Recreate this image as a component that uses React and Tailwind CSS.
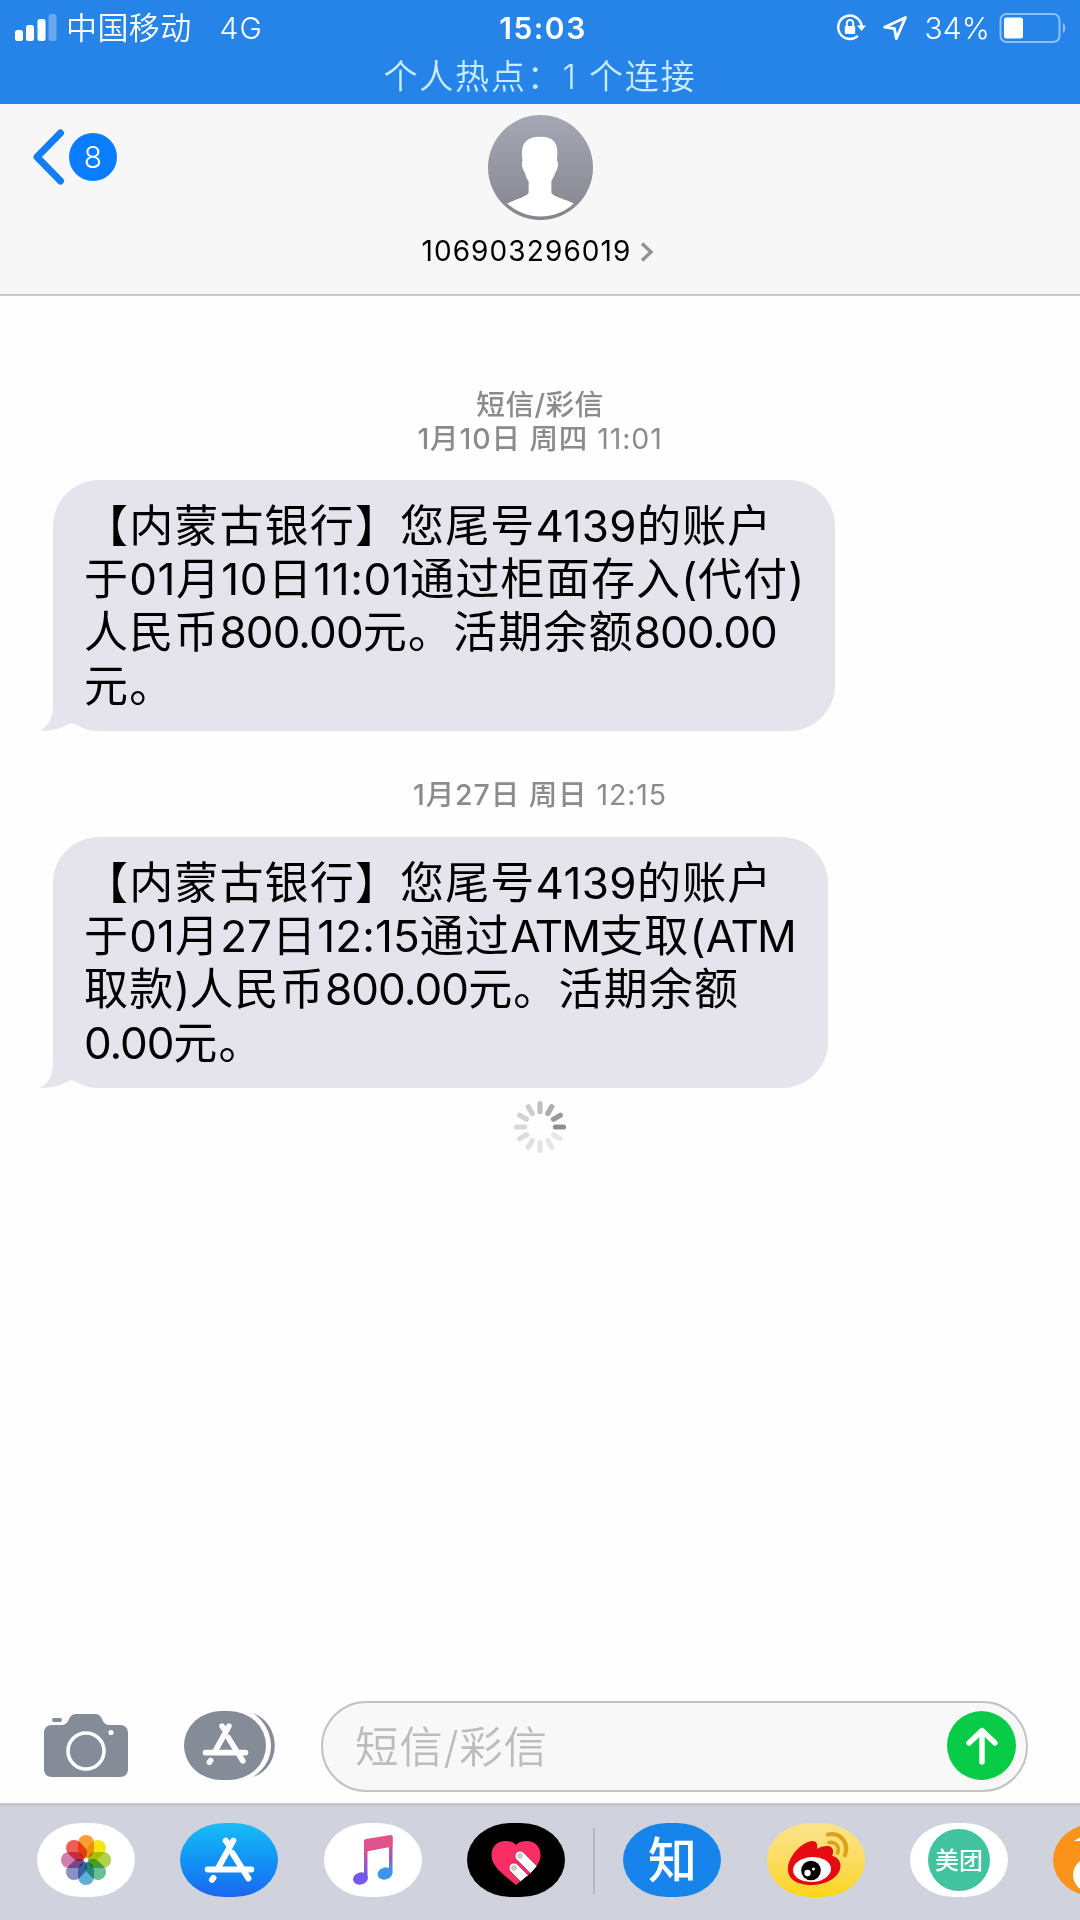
import React from "react";

// Splits a string into Latin and CJK runs so each script keeps its own tracking.
function Mixed({ text, digits }) {
  const runs = text.match(/[A-Z]+|[\x21-\x40]+|[^\x21-\x7e]+/g) || [];
  return runs.map((run, i) => (
    <span key={i} className={/[A-Z]/.test(run) ? "tracking-[-1.9px]" : /[\x21-\x40]/.test(run) ? digits : "tracking-[1.150px]"}>
      {run}
    </span>
  ));
}

function StatusBar() {
  return (
    <div className="h-[104px] bg-[#2684e8] text-white">
      <div className="grid h-[55px] grid-cols-3 items-center pr-[13px] pl-[15px] text-[30px]">
        <div className="flex items-center">
          <svg width="42" height="27" viewBox="0 0 42 27" fill="#fff">
            <rect x="0" y="16" width="8" height="11" rx="2.5" />
            <rect x="11" y="11" width="8" height="16" rx="2.5" />
            <rect x="22.500" y="5" width="8" height="22" rx="2.5" />
            <rect x="33.500" y="0" width="8" height="27" rx="2.5" opacity="0.3" />
          </svg>
          <span className="mt-px ml-[9px] text-[31px] font-[350] tracking-[0.4px]">中国移动</span>
          <span className="mt-px ml-[28px] font-[350] tracking-[0.9px]">4G</span>
        </div>
        <div className="mt-px pl-1 text-center font-semibold tracking-[1.500px]">15:03</div>
        <div className="flex items-center justify-end">
          <svg width="30" height="30" viewBox="0 0 30 30" fill="none" stroke="#fff" strokeWidth="2.500">
            <path d="M25.600 13.500A11.700 11.700 0 1 0 21.800 22.900" />
            <path d="M21 12.500h9l-4.500 5.500z" fill="#fff" stroke="none" />
            <rect x="8.800" y="13" width="10.400" height="8" rx="1" fill="#fff" stroke="none" />
            <path d="M10.800 13v-2.800a3.200 3.200 0 0 1 6.400 0V13" strokeWidth="2" />
          </svg>
          <svg className="ml-[16px]" width="26" height="26" viewBox="0 0 26 26" fill="none" stroke="#fff" strokeWidth="2.800" strokeLinejoin="round">
            <path d="M23.500 2.500L2.500 12.200l10 1.400 1.800 10z" />
          </svg>
          <span className="mt-px ml-[17px] text-[30px] font-[350] tracking-[0.1px]">34%</span>
          <svg className="ml-[9px]" width="68" height="32" viewBox="0 0 68 32" fill="none">
            <rect x="1.500" y="2" width="59" height="28" rx="6" stroke="#8cc0f7" strokeWidth="2" />
            <rect x="5" y="5.500" width="19" height="21" rx="2.500" fill="#fff" />
            <path d="M64 11c3 1 3 9 0 10z" fill="#8cc0f7" />
          </svg>
        </div>
      </div>
      <div className="pt-px text-center text-[34px] leading-[42px] font-[350] tracking-[1.800px] text-[#c9ebff]">
        个人热点：1 个连接
      </div>
    </div>
  );
}

function Header() {
  return (
    <div className="grid h-[192px] grid-cols-3 border-b-2 border-[#c9c9cb] bg-[#f7f7f8]">
      <div className="flex items-start pt-[25px] pl-[32px]">
        <svg width="34" height="56" viewBox="0 0 34 56" fill="none" stroke="#137ef3" strokeWidth="7" strokeLinecap="round" strokeLinejoin="round">
          <path d="M28.500 4L5 28l23.500 24" />
        </svg>
        <span className="mt-1 ml-[3px] flex size-12 items-center justify-center rounded-full bg-[#0a7cff] text-[30px] font-[350] text-white">
          8
        </span>
      </div>
      <div className="flex flex-col items-center pt-[11px]">
        <svg width="105" height="105" viewBox="0 0 106 106">
          <defs>
            <linearGradient id="avatar" x1="0" y1="0" x2="0" y2="1">
              <stop offset="0" stopColor="#a5a8b5" />
              <stop offset="1" stopColor="#85858d" />
            </linearGradient>
            <clipPath id="bust">
              <circle cx="53" cy="53" r="49.500" />
            </clipPath>
          </defs>
          <circle cx="53" cy="53" r="53" fill="url(#avatar)" />
          <path
            clipPath="url(#bust)"
            fill="#fff"
            d="M52 22c10-1 18 4 18 14 0 3 0 7-.5 10 2 1 1.500 8-1.500 12-1 4-3 6-4 9v11c0 4 14 7 22 11 10 5 10 20 10 20H10s0-15 10-20c8-4 21-7 21-11V67c-2-3-3-6-4-9-3-4-3.500-11-2-12-.5-3-1-7-.5-11 1-9 8-13 17.500-13z"
          />
        </svg>
        <div className="mt-[13px] flex items-center pr-[5px] text-[28px] leading-[36px] text-black">
          <span className="tracking-[1.100px]">106903296019</span>
          <svg className="mt-[1px] ml-[8px]" width="14" height="20" viewBox="0 0 14 20" fill="none" stroke="#929296" strokeWidth="3.400">
            <path d="M2 1.500L11 10l-9 8.500" />
          </svg>
        </div>
      </div>
    </div>
  );
}

function Stamp({ date, time }) {
  return (
    <div className="text-center text-[28.500px] leading-[34px] tracking-[0.900px] text-[#8b8b8e]">
      <span className="font-medium">{date}</span> {time}
    </div>
  );
}

function Bubble({ lines, wide }) {
  return (
    <div
      className={
        "relative ml-[53px] h-[251px] rounded-[46px] bg-[#e5e4ec] pt-[20px] pl-[31px] text-[44px] leading-[53.200px] text-black " +
        (wide ? "w-[782px]" : "w-[775px]")
      }
    >
      <svg className="absolute bottom-0 -left-[13px]" width="60" height="50" viewBox="0 0 60 50" fill="#e5e4ec">
        <path d="M13 0V24C13 38 8 45 0 50C12 50 23 47 31 42L60 50V0Z" />
      </svg>
      {lines.map(([text, digits]) => (
        <p key={text} className="relative whitespace-pre">
          <Mixed text={text} digits={digits} />
        </p>
      ))}
    </div>
  );
}

const spokes = ["#8e8e8e", "#e8e8e8", "#e6e6e6", "#e3e3e3", "#e0e0e0", "#dcdcdc", "#d8d8d8", "#d3d3d3", "#cdcdcd", "#c2c2c2", "#adadad", "#9b9b9b"];

function Spinner() {
  return (
    <svg className="mx-auto mt-3 block" width="54" height="54" viewBox="-27 -27 54 54" strokeWidth="5.200" strokeLinecap="round">
      {spokes.map((color, i) => (
        <path key={i} d="M15.500 0H23.500" stroke={color} transform={`rotate(${i * 30})`} />
      ))}
    </svg>
  );
}

function AppStoreMark({ size }) {
  return (
    <svg width={size} height={size} viewBox="0 0 54 50" fill="none" stroke="#fff" strokeWidth="6.400" strokeLinecap="round">
      <path d="M23 5L26.500 10M31 5L15 34" />
      <path d="M30 18L47 45" />
      <path d="M4 35.500H50" />
      <path d="M10 44.500L8.500 46.500" />
    </svg>
  );
}

function Composer() {
  return (
    <div className="flex h-[102px] items-start pl-11">
      <svg className="mt-[13px]" width="84" height="64" viewBox="0 0 84 64" fill="#868b98">
        <path d="M8 11H16C22 11 23 9 25 5 27 1 29 0 33 0H50C54 0 56 1 58 5 60 9 61 11 67 11H76C81 11 84 14 84 19V55C84 60 81 63 76 63H8C3 63 0 60 0 55V19C0 14 3 11 8 11Z" />
        <rect x="8" y="4" width="10" height="4" rx="2" />
        <circle cx="42" cy="37" r="18" fill="none" stroke="#fff" strokeWidth="3.600" />
        <circle cx="67" cy="18.500" r="2.600" fill="#fff" />
      </svg>
      <div className="mt-[10px] ml-[56px] flex">
        <div className="flex h-[69px] w-[82px] items-center justify-center rounded-[45%/50%] bg-[#868b98] pb-1">
          <AppStoreMark size={47} />
        </div>
        <svg className="-ml-[15px]" width="24" height="69" viewBox="0 0 24 69" fill="#868b98">
          <path d="M2 2C31 13 31 56 2 66C27 50 25 18 2 2Z" />
        </svg>
      </div>
      <div className="ml-[46px] flex h-[91px] w-[707px] items-center justify-between rounded-full border-2 border-[#c3c3c5] bg-[#f8f8f8] pr-[10px] pl-[32px]">
        <span className="pt-[2px] text-[43.500px] font-[350] tracking-[0.700px] text-[#bcbcbf]">短信/彩信</span>
        <span className="mb-[2px] flex size-[69px] items-center justify-center rounded-full bg-[#08cb48]">
          <svg width="34" height="38" viewBox="0 0 34 38" fill="none" stroke="#fff" strokeWidth="5.400" strokeLinecap="round" strokeLinejoin="round">
            <path d="M17 35V4M4 16L17 3.500L30 16" />
          </svg>
        </span>
      </div>
    </div>
  );
}

const petals = ["#f8951d", "#f3e500", "#a7cf38", "#56b98b", "#4aa8cf", "#8282c0", "#cf6fa6", "#ee4b45"];

function PhotosMark() {
  return (
    <svg width="52" height="52" viewBox="-26 -26 52 52">
      {petals.map((color, i) => (
        <rect
          key={i}
          className="mix-blend-multiply"
          x="-8"
          y="-25"
          width="16"
          height="23"
          rx="8"
          fill={color}
          opacity="0.9"
          transform={`rotate(${i * 45})`}
        />
      ))}
    </svg>
  );
}

function MusicMark() {
  return (
    <svg width="42" height="52" viewBox="0 0 42 52">
      <defs>
        <linearGradient id="note" x1="0" y1="0" x2="0" y2="1">
          <stop offset="0.100" stopColor="#f0467d" />
          <stop offset="0.450" stopColor="#b855ae" />
          <stop offset="1" stopColor="#6a55ee" />
        </linearGradient>
        <linearGradient id="stem" x1="0" y1="0" x2="0" y2="1">
          <stop offset="0.100" stopColor="#f0467d" />
          <stop offset="0.600" stopColor="#8a62bd" />
          <stop offset="1" stopColor="#3b93ed" />
        </linearGradient>
      </defs>
      <ellipse cx="8.500" cy="44.500" rx="7.500" ry="6" fill="#7757f0" transform="rotate(-15 8.500 44.500)" />
      <ellipse cx="33" cy="39.500" rx="7.500" ry="6" fill="#3f95ee" transform="rotate(-15 33 39.500)" />
      <path d="M12 8L15.500 7V44H12Z" fill="url(#note)" />
      <path d="M37 2H40.500V39H37Z" fill="url(#stem)" />
      <path d="M12 7Q12 5.500 14 5L38.500 1Q40.500 .800 40.500 2.500V12.500L12 18Z" fill="#e0528c" />
    </svg>
  );
}

function HeartMark() {
  return (
    <svg width="50" height="46" viewBox="0 0 50 46">
      <defs>
        <clipPath id="heart">
          <path d="M25 5C31-2 50-1 49.500 16 49 28 33 38 25 45 17 38 1 28 .5 16 0-1 19-2 25 5Z" />
        </clipPath>
      </defs>
      <g clipPath="url(#heart)">
        <rect width="50" height="46" fill="#fb2d65" />
        <g transform="translate(29 16) rotate(-45)" fill="#fff" stroke="#c92350" strokeWidth="0.800">
          <rect x="-5" y="-5" width="10" height="36" rx="5" />
          <circle r="2.300" fill="#d6d0d2" stroke="#b9a9ae" />
        </g>
        <g transform="translate(23 28) rotate(-45)" fill="#fff" stroke="#c92350" strokeWidth="0.800">
          <rect x="-5" y="-5" width="10" height="36" rx="5" />
          <circle r="2.300" fill="#d6d0d2" stroke="#b9a9ae" />
        </g>
      </g>
    </svg>
  );
}

function WeiboMark() {
  return (
    <svg className="mb-[2px] ml-[5px]" width="62" height="54" viewBox="0 0 62 54">
      <path
        fill="#e60a12"
        d="M1 38C0 27 12 12 23 9.500c6-1.500 8 1.500 7 7.500 6-4 17-5 16 3 0 2-1 3-.5 4 5 1 8 5 8 10C53 46 38 53 24 53 12 53 1 48 1 38Z"
      />
      <ellipse cx="25" cy="37.500" rx="19" ry="12.500" fill="#fff" transform="rotate(-4 25 37.500)" />
      <circle cx="24" cy="38.500" r="9.800" fill="#000" />
      <circle cx="20.500" cy="41" r="3.200" fill="#fff" />
      <circle cx="26.500" cy="37" r="1.500" fill="#fff" />
      <path d="M41 2.500C54 0 62 11 58 23" fill="none" stroke="#dba21c" strokeWidth="4.200" strokeLinecap="round" />
      <path d="M42 10.500C49 9.500 53 15 50.500 21" fill="none" stroke="#dba21c" strokeWidth="3.600" strokeLinecap="round" />
    </svg>
  );
}

function AppTile({ className, children }) {
  return (
    <div className={"flex h-[74px] w-[98px] shrink-0 items-center justify-center overflow-hidden rounded-[45%/50%] " + className}>
      {children}
    </div>
  );
}

function AppStrip() {
  return (
    <div className="flex h-[117px] items-start gap-[45.300px] overflow-hidden border-t-[3px] border-[#c6c7cb] bg-[#d0d3de] pt-[17px] pl-[37px]">
      <AppTile className="bg-white">
        <PhotosMark />
      </AppTile>
      <AppTile className="bg-linear-to-b from-[#1cbdf6] to-[#1c66f0] pb-[2px]">
        <AppStoreMark size={51} />
      </AppTile>
      <AppTile className="bg-white">
        <MusicMark />
      </AppTile>
      <AppTile className="bg-black pt-[6px]">
        <HeartMark />
      </AppTile>
      <div className="mt-[5px] -mr-[17px] -ml-[17px] h-[66px] w-[2px] shrink-0 bg-[#b3b5c0]" />
      <AppTile className="bg-[#1684ea] text-[49px] leading-none font-medium text-white">知</AppTile>
      <AppTile className="bg-linear-to-b from-[#fbe38a] to-[#fbd500]">
        <WeiboMark />
      </AppTile>
      <AppTile className="bg-white">
        <span className="flex size-[62px] items-center justify-center rounded-full bg-[#41c3a0] pt-[2px] text-[24px] leading-none font-medium text-white">
          美团
        </span>
      </AppTile>
      <AppTile className="bg-[#fb9219]">
        <svg width="60" height="74" viewBox="0 0 60 74" fill="#fff">
          <path d="M2 18L10 13L20 18Z" />
          <ellipse cx="26" cy="52" rx="25" ry="20" />
        </svg>
      </AppTile>
    </div>
  );
}

const deposit = [
  ["【内蒙古银行】您尾号4139的账户", "tracking-[0.4px]"],
  ["于01月10日11:01通过柜面存入(代付)", "tracking-[0.6px]"],
  ["人民币800.00元。活期余额800.00", "tracking-[-0.9px]"],
  ["元。", ""],
];

const withdrawal = [
  ["【内蒙古银行】您尾号4139的账户", "tracking-[0.4px]"],
  ["于01月27日12:15通过ATM支取(ATM", "tracking-[0.1px]"],
  ["取款)人民币800.00元。活期余额", "tracking-[-0.9px]"],
  ["0.00元。", "tracking-[-1.1px]"],
];

export default function App() {
  return (
    <div className="flex h-[1920px] w-[1080px] flex-col overflow-hidden bg-[#fefefe] font-['Inter','Noto_Sans_CJK_SC',sans-serif]">
      <StatusBar />
      <Header />
      <main className="flex-1 pt-[92px]">
        <div className="text-center text-[28.700px] leading-[34px] font-medium tracking-[0.400px] text-[#8b8b8e]">短信/彩信</div>
        <Stamp date="1月10日 周四" time="11:01" />
        <div className="mt-6">
          <Bubble wide lines={deposit} />
        </div>
        <div className="mt-[47px] mb-[25px]">
          <Stamp date="1月27日 周日" time="12:15" />
        </div>
        <Bubble lines={withdrawal} />
        <Spinner />
      </main>
      <Composer />
      <AppStrip />
    </div>
  );
}
